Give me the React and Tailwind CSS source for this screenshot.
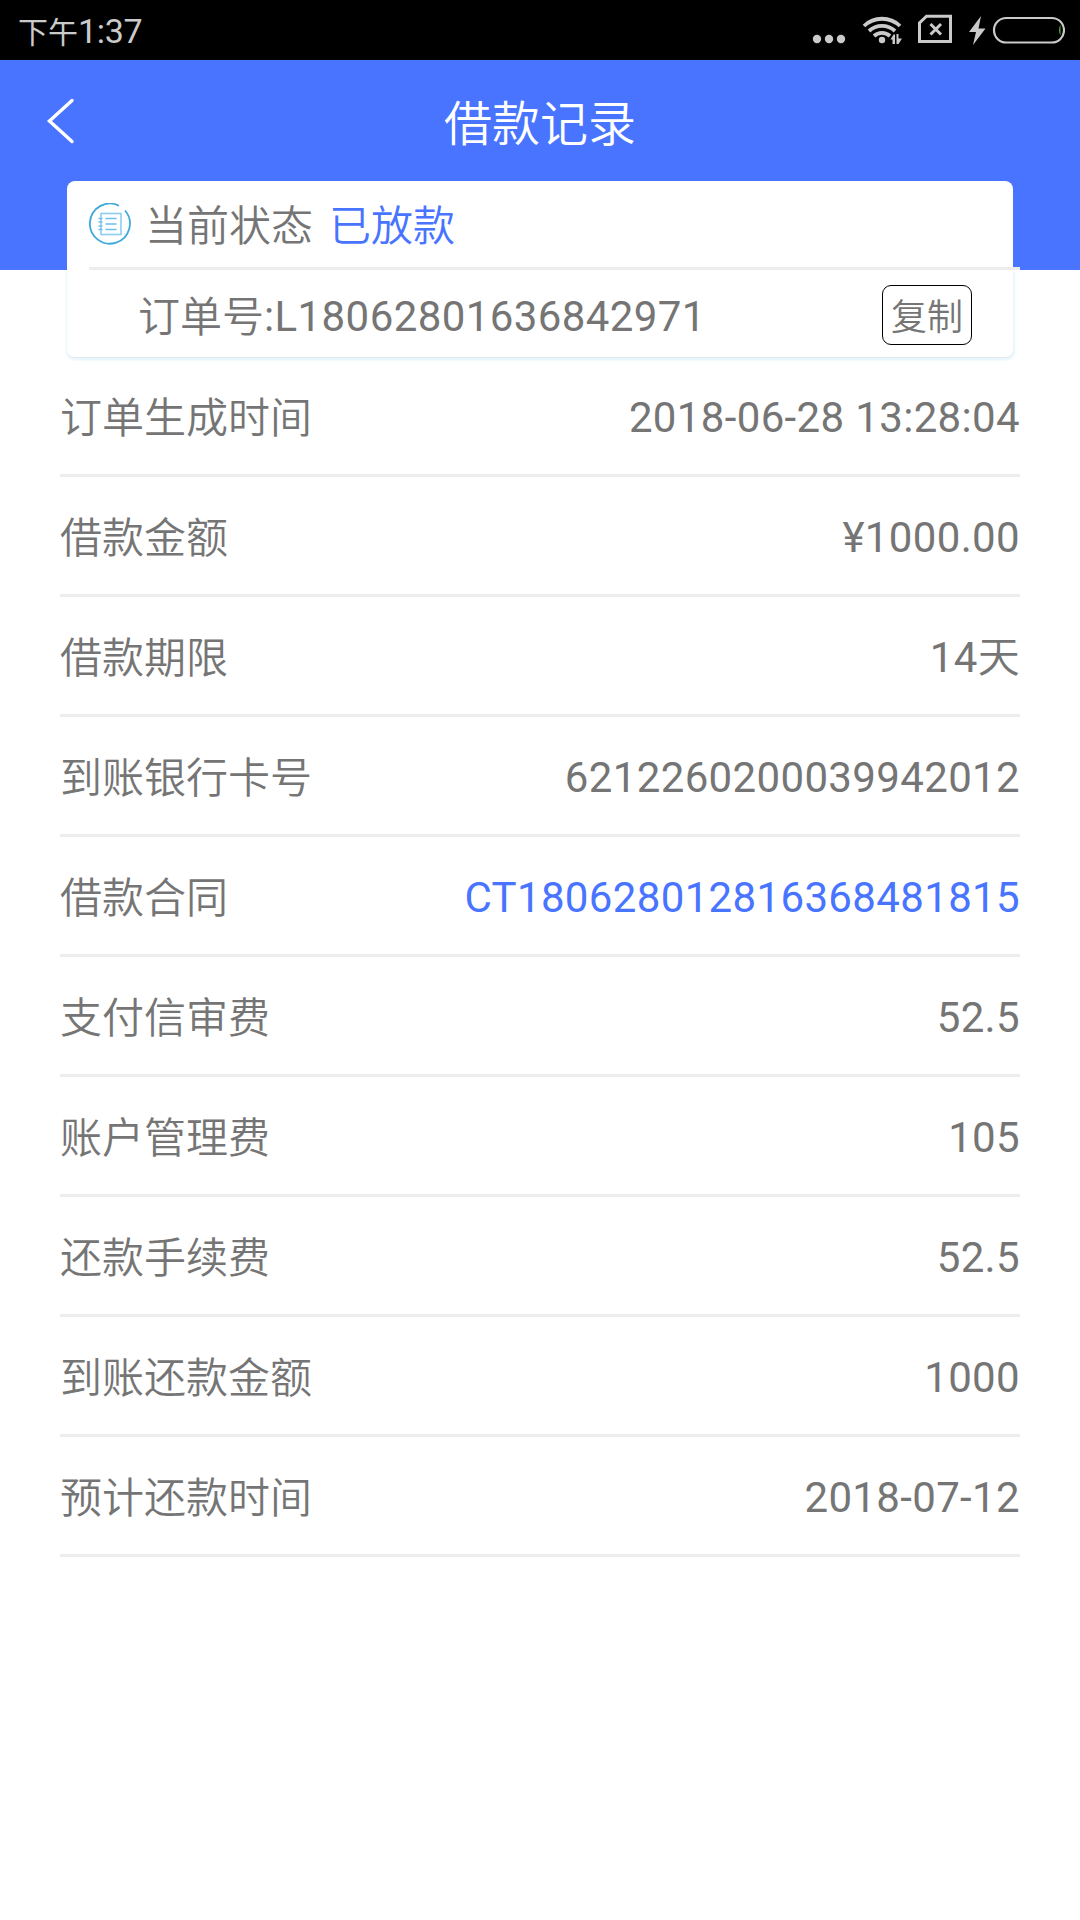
import { useState } from 'react';

const rows = [
    { label: '订单生成时间', value: '2018-06-28 13:28:04' },
    { label: '借款金额', value: '¥1000.00' },
    { label: '借款期限', value: '14', unit: '天' },
    { label: '到账银行卡号', value: '6212260200039942012' },
    { label: '借款合同', value: 'CT180628012816368481815', link: true },
    { label: '支付信审费', value: '52.5' },
    { label: '账户管理费', value: '105' },
    { label: '还款手续费', value: '52.5' },
    { label: '到账还款金额', value: '1000' },
    { label: '预计还款时间', value: '2018-07-12' },
];

const StatusBar = () => (
    <div className="flex h-[60px] items-center justify-between bg-black pl-[18px] pr-[15px] text-[#cacaca]">
        <div className="flex items-baseline pt-0.5 leading-none">
            <span className="text-[30px] font-normal">下午</span>
            <span className="text-[34px] font-normal tracking-[-0.3px]">1:37</span>
        </div>
        <svg width="253" height="60" viewBox="812 0 253 60" fill="none">
            <g fill="#cacaca">
                <circle cx="817" cy="39" r="4.2" />
                <circle cx="829" cy="39" r="4.2" />
                <circle cx="841" cy="39" r="4.2" />
                <circle cx="882" cy="40" r="3.2" />
                <path d="M890.5 39.5L893.5 34.5H895V44H892.5V39.5ZM896.5 34H898.5V38.5H902L898.5 44H896.5Z" />
                <path d="M981 16L969 32H976L973 45L985.5 28.5H978.5Z" />
            </g>
            <g stroke="#cacaca" strokeWidth="3.8">
                <path d="M864 26A26 26 0 0 1 900 26" />
                <path d="M869 31A19 19 0 0 1 895 31" />
                <path d="M874 36A12 12 0 0 1 890 36" />
                <path d="M926.5 16.2H950.5V41.5H919.500V23Z" strokeWidth="3" />
                <path d="M930.5 24L941 34.5M941 24L930.5 34.5" strokeWidth="3" />
                <rect x="994" y="18" width="70" height="24.5" rx="12.25" strokeWidth="2.2" />
            </g>
            <path d="M1060.5 24.5Q1057.5 30 1060.5 35.5Z" fill="#5fa83c" />
        </svg>
    </div>
);

const App = () => {
    const [orderNo] = useState('L18062801636842971');

    return (
        <div className="min-h-[1920px] w-full bg-white font-['Roboto','Noto_Sans_CJK_SC',sans-serif] text-[42px] text-[#757575]">
            <StatusBar />

            {/* Header */}
            <div className="h-[210px] bg-[#4874ff]">
                <div className="grid h-[121px] grid-cols-[1fr_auto_1fr] items-center px-[45px] text-white">
                    <svg width="30" height="48" viewBox="0 0 30 48" fill="none" stroke="currentColor" strokeWidth="3.4" strokeLinecap="round">
                        <path d="M27 3.5L4.5 24L27 44.5" />
                    </svg>
                    <h1 className="pt-2 text-[48px] font-[350] leading-none">借款记录</h1>
                </div>
            </div>

            {/* Status card */}
            <div className="relative -mt-[89px] -mb-px mx-[67px] h-[177px] rounded-[8px] bg-white">
                <div className="relative -mr-[7px] ml-[22px] flex h-[89px] items-center border-b-3 border-[#ededed]">
                    <svg width="42" height="42" viewBox="0 0 42 42" fill="none">
                        <path d="M30 2.8A20 20 0 1 0 36 7.5" stroke="#3fa9dc" strokeWidth="1.8" />
                        <rect x="12" y="10.5" width="20" height="21" stroke="#8ccdf0" strokeWidth="1.6" />
                        <path d="M16.5 15.5H27.5M16.5 21H27.5M16.5 26.5H27.5M9.5 15.5H13.5M9.5 19H13.5M9.5 23H13.5M9.5 26.5H13.5" stroke="#6bc0ea" strokeWidth="1.6" />
                    </svg>
                    <span className="ml-3.5 pt-1.5 font-[350] leading-none">当前状态</span>
                    <span className="ml-4 pt-1.5 font-[350] leading-none text-[#4874ff]">已放款</span>
                </div>
                <div className="flex h-[88px] items-center justify-between rounded-b-[8px] border-b border-[#e0ebef] pt-0.5 pl-[71px] pr-[41px] shadow-[2px_2px_2px_#eaf5fc,-1px_2px_2px_#eaf5fc]">
                    <div className="flex items-center leading-none">
                        <span className="pt-1.5 font-[350]">订单号</span>
                        <span className="pt-1 tracking-[0.4px]">:{orderNo}</span>
                    </div>
                    <button className="h-[60px] w-[90px] rounded-[9px] border border-black pt-1.5 text-[36px] font-[350] leading-none">复制</button>
                </div>
            </div>

            {/* Detail rows */}
            <ul className="mx-[60px]">
                {rows.map((row) => (
                    <li key={row.label} className="flex h-[120px] items-center justify-between border-b-3 border-[#ededed] leading-none">
                        <span className="pt-1.5 font-[350]">{row.label}</span>
                        <span className={row.link ? 'pt-1 tracking-[0.35px] text-[#4874ff]' : 'pt-1 tracking-[0.35px]'}>
                            {row.value}
                            {row.unit && <span className="font-[350]">{row.unit}</span>}
                        </span>
                    </li>
                ))}
            </ul>
        </div>
    );
};

export default App;
